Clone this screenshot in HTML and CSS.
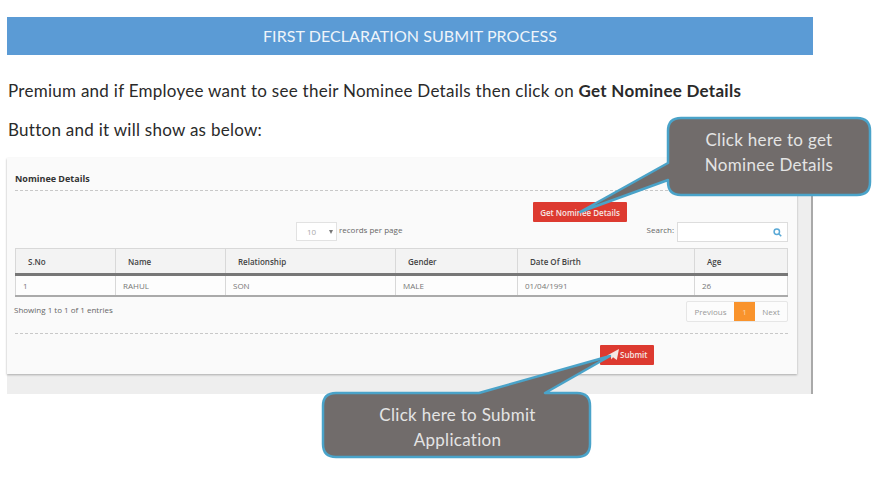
FILE: index.html
```html
<!DOCTYPE html>
<html>

<head>
    <meta charset="UTF-8">
    <title>First Declaration Submit Process</title>

    <link rel="stylesheet" href="styles.css">
</head>

<body>
<h1 class="banner">FIRST DECLARATION SUBMIT PROCESS</h1>

<p class="doc-text first">Premium and if Employee want to see their Nominee Details then click on <b>Get Nominee Details</b></p>
<p class="doc-text second">Button and it will show as below:</p>

<div class="shot">
    <div class="card">
        <div class="card-title">Nominee Details</div>

        <div class="action-row">
            <button class="red-btn">Get Nominee Details</button>
        </div>

        <div class="filter-row">
            <div class="length">
                <span class="select-box"><span>10</span><span class="caret"></span></span>
                <span class="filter-label">records per page</span>
            </div>
            <div class="search">
                <span class="filter-label">Search:</span>
                <span class="search-box">
                    <svg width="9" height="9" viewBox="0 0 9 9"><circle cx="3.8" cy="3.8" r="2.7" fill="none" stroke="#5aa9d6" stroke-width="1.5"/><path d="M5.8 5.8L8.2 8.2" stroke="#5aa9d6" stroke-width="1.6"/></svg>
                </span>
            </div>
        </div>

        <table class="grid">
            <thead>
                <tr>
                    <th class="c1">S.No</th>
                    <th class="c2">Name</th>
                    <th class="c3">Relationship</th>
                    <th class="c4">Gender</th>
                    <th class="c5">Date Of Birth</th>
                    <th class="c6">Age</th>
                </tr>
            </thead>
            <tbody>
                <tr>
                    <td>1</td>
                    <td>RAHUL</td>
                    <td>SON</td>
                    <td>MALE</td>
                    <td>01/04/1991</td>
                    <td>26</td>
                </tr>
            </tbody>
        </table>

        <div class="pager-row">
            <div class="entries">Showing 1 to 1 of 1 entries</div>
            <div class="pager">
                <span class="page">Previous</span>
                <span class="page current">1</span>
                <span class="page">Next</span>
            </div>
        </div>

        <div class="submit-row">
            <button class="red-btn submit">
                <svg width="12" height="11" viewBox="0 0 11 10"><path d="M0 6L11 0L9 10L5.5 7.5L4 9.5L3.5 7Z" fill="#f4e6e4"/></svg>
                Submit
            </button>
        </div>
    </div>
</div>

<!-- callouts sit over the screenshot -->
<svg class="callout-lines" width="888" height="484" viewBox="0 0 888 484">
    <path class="bubble" d="M681 118H857Q870 118 870 131V182Q870 195 857 195H681Q668 195 668 182V180L580 212L668 163V131Q668 118 681 118Z"/>
    <path class="bubble" d="M336 393H479L610 356L545 393H577Q590 393 590 406V444Q590 457 577 457H336Q323 457 323 444V406Q323 393 336 393Z"/>
</svg>
<div class="callout-text top">Click here to get<br>Nominee Details</div>
<div class="callout-text bottom">Click here to Submit<br>Application</div>
</body>

</html>
```

FILE: styles.css
```css
body {
    margin: 0;
    background: #fff;
    font-family: "Lato", sans-serif;
    color: #2a2a2a;
}

.banner {
    margin: 17px 75px 0 7px;
    height: 38px;
    line-height: 38px;
    background: #5b9bd5;
    color: #eef4fa;
    text-align: center;
    font-size: 16px;
    font-weight: 400;
    letter-spacing: 0.07px;
}

.doc-text {
    margin: 0 0 0 8px;
    font-size: 17px;
    line-height: 24px;
    letter-spacing: 0.27px;
}

.first {
    margin-top: 24px;
}

.second {
    margin-top: 15px;
}

/* The pasted screenshot */
.shot {
    margin: 16px 75px 0 7px;
    height: 236px;
    background: #eeeeee;
    border-right: 2px solid #a9a9a9;
    box-sizing: border-box;
}

.card {
    width: 790px;
    height: 216px;
    box-sizing: border-box;
    padding: 0 9px 0 8px;
    background: #fafafa;
    box-shadow: 0 1px 2px #aaa;
    font-family: "Open Sans", sans-serif;
    font-size: 8px;
    color: #666;
}

.card-title {
    height: 33px;
    line-height: 42px;
    font-weight: 700;
    font-size: 9px;
    color: #333;
    border-bottom: 1px dashed #c8c8c8;
    box-sizing: border-box;
    margin-bottom: 1px;
}

.action-row {
    display: flex;
    justify-content: flex-end;
    padding: 10px 161px 0 0;
}

.red-btn {
    height: 20px;
    padding: 0;
    border: 0;
    border-radius: 1px;
    background: #dd3a30;
    color: #f6e6e4;
    font-family: "Open Sans", sans-serif;
    font-size: 8px;
    font-weight: 600;
}

.action-row .red-btn {
    width: 94px;
}

.filter-row {
    display: flex;
    justify-content: space-between;
    align-items: flex-start;
    height: 26px;
}

.filter-label {
    margin-top: -5px;
}

.length {
    display: flex;
    align-items: center;
    gap: 2px;
    margin-left: 281px;
}

.select-box {
    display: flex;
    align-items: center;
    justify-content: space-between;
    box-sizing: border-box;
    width: 41px;
    height: 19px;
    padding: 0 3px 0 10px;
    background: #fff;
    border: 1px solid #e2e2e2;
    color: #aaa;
}

.caret {
    width: 0;
    height: 0;
    border-left: 2px solid transparent;
    border-right: 2px solid transparent;
    border-top: 4px solid #777;
}

.search {
    display: flex;
    align-items: center;
    gap: 3px;
}

.search-box {
    display: flex;
    align-items: center;
    justify-content: flex-end;
    box-sizing: border-box;
    width: 111px;
    height: 20px;
    padding-right: 5px;
    background: #fff;
    border: 1px solid #ddd;
}

.grid {
    width: 773px;
    border-collapse: collapse;
    table-layout: fixed;
}

.grid th {
    box-sizing: border-box;
    height: 26px;
    padding: 0 0 0 12px;
    text-align: left;
    background: #f3f3f3;
    border: 1px solid #d8d8d8;
    border-bottom: 3px solid #777;
    color: #444;
    font-weight: 600;
}

.grid td {
    box-sizing: border-box;
    height: 21px;
    padding: 0 0 0 7px;
    background: #fdfdfd;
    border: 1px solid #d8d8d8;
    border-bottom: 2px solid #aaa;
    color: #777;
}

.c1 { width: 100px; }
.c2 { width: 110px; }
.c3 { width: 170px; }
.c4 { width: 122px; }
.c5 { width: 177px; }

.pager-row {
    display: flex;
    justify-content: space-between;
    align-items: flex-start;
    width: 773px;
    height: 26px;
}

.entries {
    margin: 7px 0 0 -1px;
}

.pager {
    display: flex;
    height: 21px;
    margin-top: 4px;
    border: 1px solid #e6e6e6;
    border-radius: 2px;
    background: #fcfcfc;
    box-sizing: border-box;
    color: #999;
}

.page {
    display: flex;
    align-items: center;
    justify-content: center;
    width: 47px;
}

.page.current {
    width: 21px;
    background: #f9932c;
    color: #fbd3a5;
}

.page:last-child {
    width: 32px;
}

.submit-row {
    display: flex;
    justify-content: flex-end;
    width: 773px;
    margin-top: 10px;
    padding: 11px 134px 0 0;
    box-sizing: border-box;
    border-top: 1px dashed #c8c8c8;
}

.submit {
    display: flex;
    align-items: center;
    gap: 1px;
    padding-left: 7px;
    width: 54px;
}

.callout-lines {
    position: absolute;
    left: 0;
    top: 0;
}

.bubble {
    fill: #716c6b;
    stroke: #4aa3c9;
    stroke-width: 2.5;
    stroke-linejoin: round;
}

.callout-text {
    position: absolute;
    text-align: center;
    color: #e4e4e4;
    font-size: 17px;
    line-height: 25px;
    letter-spacing: 0.3px;
}

.callout-text.top {
    left: 668px;
    top: 127px;
    width: 202px;
}

.callout-text.bottom {
    left: 324px;
    top: 402px;
    width: 267px;
}
```
